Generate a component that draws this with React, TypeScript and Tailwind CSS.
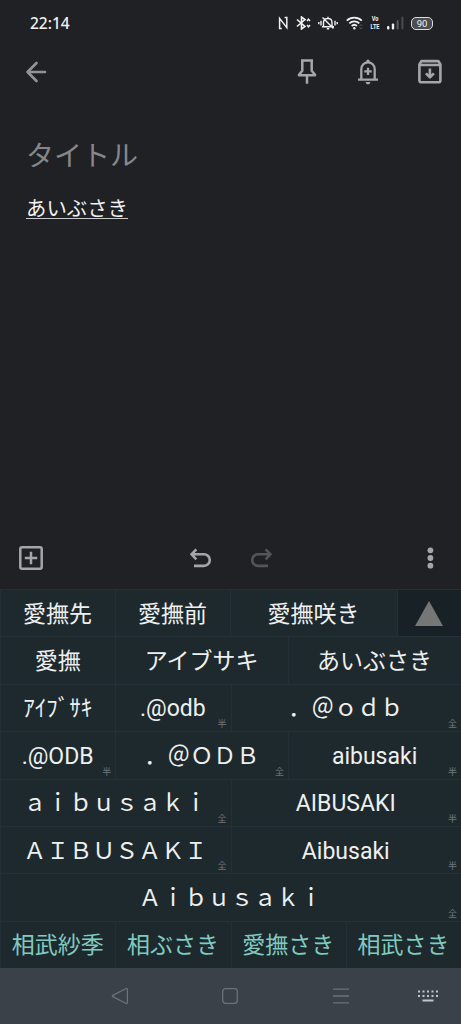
import type { ReactNode } from 'react';
import clsx from 'clsx';

// ─── Candidate data ───────────────────────────────────────────────────────────

interface Candidate { text: string; span: string; mark?: '半' | '全'; predicted?: boolean }

const ROWS: Candidate[][] = [
  [
    { text: '愛撫', span: 'col-span-2' },
    { text: 'アイブサキ', span: 'col-span-3' },
    { text: 'あいぶさき', span: 'col-span-3' },
  ],
  [
    { text: 'ｱｲﾌﾞｻｷ', span: 'col-span-2' },
    { text: '.@odb', span: 'col-span-2', mark: '半' },
    { text: '．＠ｏｄｂ', span: 'col-span-4', mark: '全' },
  ],
  [
    { text: '.@ODB', span: 'col-span-2', mark: '半' },
    { text: '．＠ＯＤＢ', span: 'col-span-3', mark: '全' },
    { text: 'aibusaki', span: 'col-span-3', mark: '半' },
  ],
  [
    { text: 'ａｉｂｕｓａｋｉ', span: 'col-span-4', mark: '全' },
    { text: 'AIBUSAKI', span: 'col-span-4', mark: '半' },
  ],
  [
    { text: 'ＡＩＢＵＳＡＫＩ', span: 'col-span-4', mark: '全' },
    { text: 'Aibusaki', span: 'col-span-4', mark: '半' },
  ],
  [{ text: 'Ａｉｂｕｓａｋｉ', span: 'col-span-8', mark: '全' }],
  [
    { text: '相武紗季', span: 'col-span-2', predicted: true },
    { text: '相ぶさき', span: 'col-span-2', predicted: true },
    { text: '愛撫さき', span: 'col-span-2', predicted: true },
    { text: '相武さき', span: 'col-span-2', predicted: true },
  ],
];

// ─── Status bar ───────────────────────────────────────────────────────────────

function StatusBar() {
  return (
    <div className="flex h-[46px] items-center justify-between pl-[30px] pr-[28px] text-[#f1f1f2]">
      <span className="pt-px font-['Noto_Sans'] text-[15.5px] font-medium leading-none">22:14</span>
      <div className="flex items-center">
        {/* NFC */}
        <svg className="mr-[7px]" width="11" height="14" viewBox="0 0 11 14" fill="none" stroke="currentColor" strokeWidth="1.5">
          <path d="M3.8 12.6H1.6V2.4l7.2 9.2V1.4H6.6" />
        </svg>
        {/* Bluetooth */}
        <svg className="mr-[7px]" width="15" height="14" viewBox="0 0 15 14" fill="none" stroke="currentColor" strokeWidth="1.6">
          <path d="M1 3.5l8 7L5.5 13V1L9 3.5l-8 7" />
          <path d="M11 5l1.5-1.8L14 5M11 9l1.5 1.8L14 9" strokeWidth="1.4" />
        </svg>
        {/* Ringer off, vibrate */}
        <svg className="mr-[8px]" width="20" height="14" viewBox="0 0 20 14" fill="none" stroke="currentColor" strokeWidth="1.4">
          <path d="M5.5 10.5V6.5C5.5 4 7.5 2.5 10 2.5S14 4 14 6.5v4M4 10.8h12M10 .8v1.5M8.8 12.7h2.4M4.5 1.5l11 11" />
          <path d="M.8 6v2.2M3 4.8v4.6M17 4.8v4.6M19.2 6v2.2" />
        </svg>
        {/* Wi-Fi */}
        <svg className="mr-[7px]" width="17" height="14" viewBox="0 0 17 14" fill="none" stroke="currentColor" strokeWidth="1.8">
          <path d="M.8 4.6c4.2-4 10.8-4 15 0M3.3 7.4c2.8-2.7 7.2-2.7 10 0M5.7 10c1.5-1.4 3.7-1.4 5.2 0" />
          <circle cx="8.3" cy="12.3" r="1.2" fill="currentColor" stroke="none" />
          <path d="M13.6 10l1.3-1.4 1.3 1.4M13.6 11.5l1.3 1.4 1.3-1.4" stroke="#5b5c5f" strokeWidth="1" />
        </svg>
        <span className="mr-[7px] flex w-[10px] scale-x-[0.8] flex-col items-center font-['Roboto'] text-[7px] font-bold leading-[8px]">
          <span>Vo</span>
          <span>LTE</span>
        </span>
        {/* Signal */}
        <svg className="mr-[7px]" width="17" height="14" viewBox="0 0 17 14" fill="currentColor">
          <rect x="0" y="10" width="2.4" height="3.5" rx="1" />
          <rect x="4.8" y="7.5" width="2.4" height="6" rx="1" />
          <rect x="9.6" y="4" width="2" height="9.5" rx="1" fill="#5b5c5f" />
          <rect x="14.4" y="0.5" width="2" height="13" rx="1" fill="#4a4b4e" />
        </svg>
        <span className="flex h-[13px] w-[22px] items-center justify-center rounded-[5px] border-[1.5px] border-[#dcdcdd] bg-[#4c4d50] pt-px font-['Roboto'] text-[9.5px] leading-none">
          90
        </span>
      </div>
    </div>
  );
}

// ─── Note header, body and toolbar ────────────────────────────────────────────

function NoteHeader() {
  return (
    <header className="flex h-[52px] items-center justify-between pl-6 pr-[18px] text-[#a5a6aa]">
      <svg width="24" height="24" viewBox="0 0 24 24" fill="none" stroke="#929396" strokeWidth="2.6" strokeLinecap="round" strokeLinejoin="round">
        <path d="M21 12H3.5M12.5 3L3.5 12l9 9" />
      </svg>
      <div className="flex items-center gap-[37px]">
        <svg width="24" height="28" viewBox="0 0 24 28" fill="none" stroke="currentColor" strokeWidth="2.5" strokeLinejoin="round">
          <path d="M6 2.4h12M7.3 2.4v10.3L4 16.7v.6h16v-.6l-3.3-4V2.4M12 17.3v8.5" />
        </svg>
        <svg width="24" height="28" viewBox="0 0 24 28" fill="none" stroke="currentColor" strokeWidth="2.3">
          <path d="M2 21.7h20M5.3 21.5V11a6.7 6.7 0 0 1 13.4 0v10.5M12 9.7v7.4M8.3 13.4h7.4" />
          <path d="M10.2 4.6V3.4a1.8 1.8 0 0 1 3.6 0v1.2zM9.6 24h4.8a2.4 2.4 0 0 1-4.8 0z" fill="currentColor" stroke="none" />
        </svg>
        <svg width="26" height="28" viewBox="0 0 26 28" fill="none" stroke="currentColor" strokeWidth="2.6" strokeLinejoin="round">
          <path d="M2.4 6.4l2-3.3h17l2 3.3v16.2a1.6 1.6 0 0 1-1.6 1.6H4a1.6 1.6 0 0 1-1.6-1.6zM2.4 7h21" />
          <path d="M12.9 10.6v8.6M8.9 15.3l4 4 4-4" />
        </svg>
      </div>
    </header>
  );
}

function NoteBody() {
  return (
    <main className="flex-1 px-[26px] pt-[35px] font-['Noto_Sans_CJK_JP',sans-serif]">
      <h1 className="text-[28px] leading-[42px] text-[#85878b]">タイトル</h1>
      <p className="mt-[17px] flex text-[20.4px] leading-[30px] text-[#f2f2f2]">
        <span className="h-[27px] border-b border-[#c8c9ca]">あいぶさき</span>
      </p>
    </main>
  );
}

function NoteToolbar() {
  return (
    <div className="grid h-[61px] grid-cols-[1fr_auto_1fr] items-center px-[18px] pb-px text-[#a5a6aa]">
      <svg width="26" height="26" viewBox="0 0 26 26" fill="none" stroke="currentColor" strokeWidth="2.5">
        <rect x="2.3" y="2.3" width="21.4" height="21.4" rx="1.8" />
        <path d="M13 6.8v12.4M6.8 13h12.4" />
      </svg>
      <div className="flex gap-[38px]">
        <svg width="24" height="24" viewBox="0 0 24 24" fill="none" stroke="currentColor" strokeWidth="2.6">
          <path d="M8.3 3.3L3.6 8.3l4.7 5M4 8.3h12a5.8 5.8 0 0 1 0 11.6H6" />
        </svg>
        <svg className="text-[#545558]" width="24" height="24" viewBox="0 0 24 24" fill="none" stroke="currentColor" strokeWidth="2.6">
          <path d="M15.7 3.3l4.7 5-4.7 5M20 8.3H8a5.8 5.8 0 0 0 0 11.6h10" />
        </svg>
      </div>
      <svg className="justify-self-end" width="26" height="26" viewBox="0 0 26 26" fill="currentColor">
        <circle cx="13.4" cy="5.3" r="2.9" />
        <circle cx="13.4" cy="13" r="2.9" />
        <circle cx="13.4" cy="20.7" r="2.9" />
      </svg>
    </div>
  );
}

// ─── Candidate panel ──────────────────────────────────────────────────────────

function Cell({ className, mark, children }: { className?: string; mark?: string; children: ReactNode }) {
  return (
    <button
      className={clsx(
        'relative flex items-center justify-center whitespace-nowrap border-l border-t border-[#233037] pt-[2px] pr-px',
        className,
      )}
    >
      {children}
      {mark && (
        <span className="absolute bottom-[2px] right-[4px] text-[9px] leading-[10px] text-[#6e777b]">{mark}</span>
      )}
    </button>
  );
}

function CandidatePanel() {
  return (
    <section className="grid h-[379px] grid-rows-8 bg-[#1e292e] font-['Roboto','Noto_Sans_CJK_JP',sans-serif] text-[23px] leading-none text-[#eef0f0]">
      <div className="grid grid-cols-[115px_115px_167px_1fr]">
        <Cell>愛撫先</Cell>
        <Cell>愛撫前</Cell>
        <Cell>愛撫咲き</Cell>
        <Cell className="bg-[#182226]">
          <svg className="mb-[2px]" width="28" height="25" viewBox="0 0 28 25" fill="#757676">
            <path d="M14 0l14 25H0z" />
          </svg>
        </Cell>
      </div>
      {ROWS.map((row, i) => (
        <div key={i} className="grid grid-cols-8">
          {row.map((c) => (
            <Cell key={c.text} mark={c.mark} className={clsx(c.span, c.predicted && 'text-[#80cbc0]')}>
              {c.text}
            </Cell>
          ))}
        </div>
      ))}
    </section>
  );
}

// ─── System navigation ────────────────────────────────────────────────────────

function NavBar() {
  return (
    <nav className="grid h-[56px] grid-cols-[65px_109px_112px_109px_66px] items-center justify-items-center bg-[#3a4149] text-[#6c7278]">
      <span />
      <svg width="18" height="18" viewBox="0 0 18 18" fill="none" stroke="currentColor" strokeWidth="1.3" strokeLinejoin="round">
        <path d="M16.4 2.2v13.6a.8.8 0 0 1-1.2.7L1.8 9.7a.8.8 0 0 1 0-1.4l13.4-6.8a.8.8 0 0 1 1.2.7z" />
      </svg>
      <svg width="18" height="18" viewBox="0 0 18 18" fill="none" stroke="currentColor" strokeWidth="1.3">
        <rect x="1.7" y="1.7" width="14.6" height="14.6" rx="2.8" />
      </svg>
      <svg width="18" height="18" viewBox="0 0 18 18" fill="none" stroke="currentColor" strokeWidth="1.3">
        <path d="M1 2.2h16M1 9h16M1 15.8h16" />
      </svg>
      <svg width="22" height="14" viewBox="0 0 22 14" fill="none" stroke="#c3c6c9" strokeWidth="2">
        <path d="M1 2.5h20M1 7h20" strokeDasharray="2 2.5" />
        <path d="M5.5 11.5h11" />
      </svg>
    </nav>
  );
}

export default function App() {
  return (
    <div className="flex h-[1024px] w-[461px] flex-col overflow-hidden bg-[#202124]">
      <StatusBar />
      <NoteHeader />
      <NoteBody />
      <NoteToolbar />
      <CandidatePanel />
      <NavBar />
    </div>
  );
}
